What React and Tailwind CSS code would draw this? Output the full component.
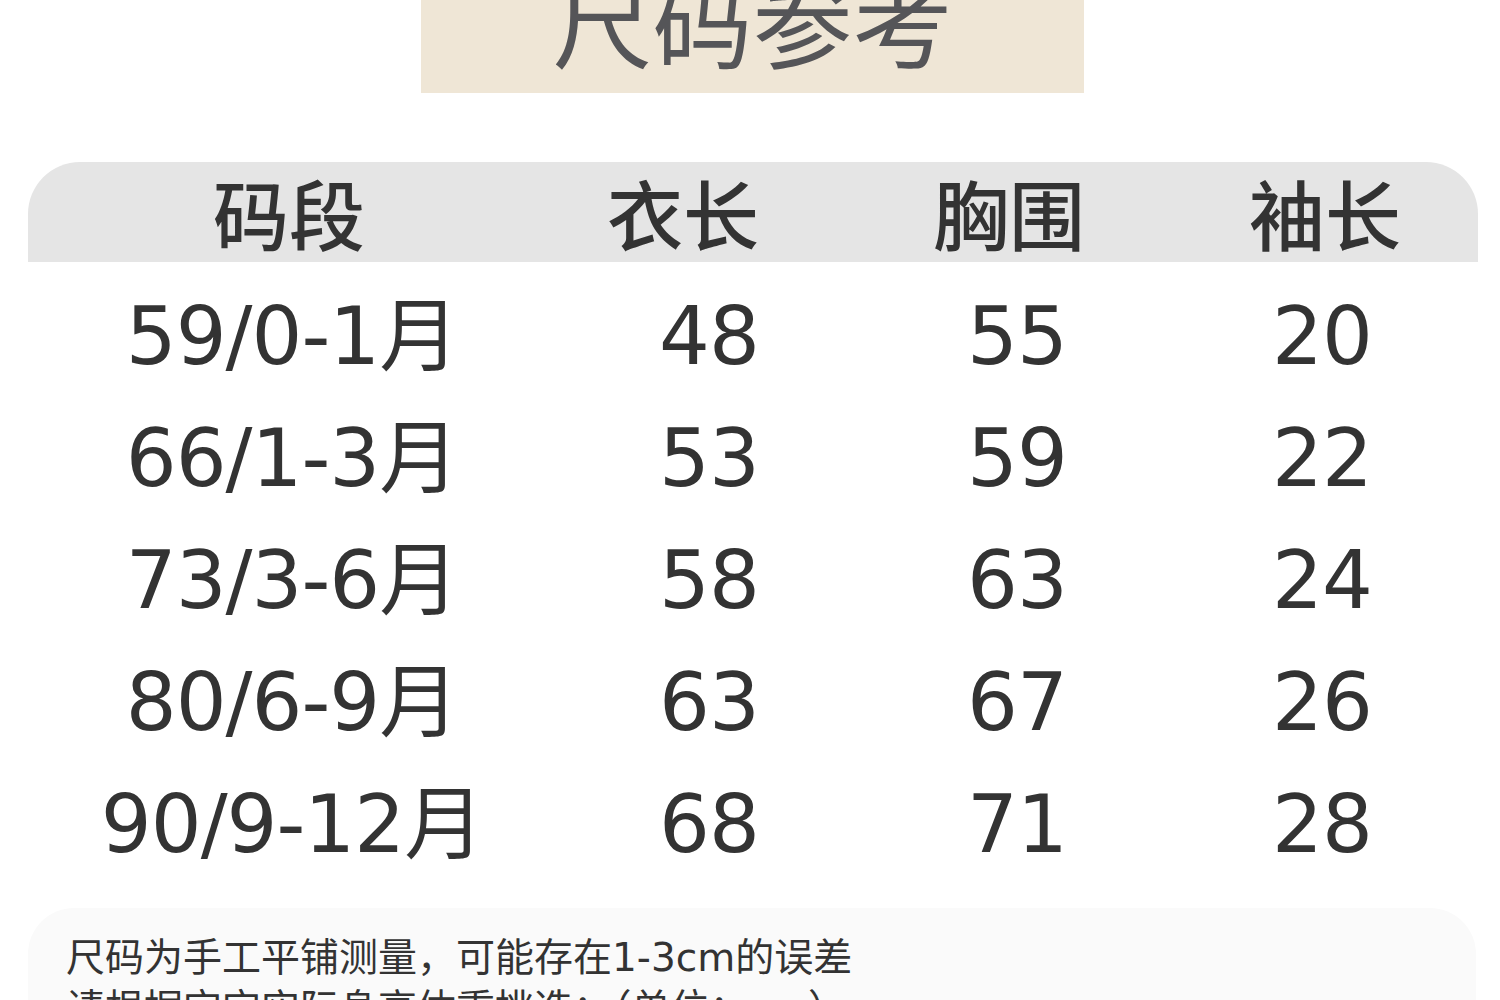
const rows = [
  ["59/0-1月", "48", "55", "20"],
  ["66/1-3月", "53", "59", "22"],
  ["73/3-6月", "58", "63", "24"],
  ["80/6-9月", "63", "67", "26"],
  ["90/9-12月", "68", "71", "28"],
];

const headers = ["码段", "衣长", "胸围", "袖长"];

function App() {
  return (
    <div
      className="w-[1500px] h-[1000px] overflow-hidden bg-white text-[#333333]"
      style={{ fontFamily: '"DejaVu Sans", "Noto Sans CJK SC", sans-serif' }}
    >
      {/* Title */}
      <div className="flex justify-center">
        <div className="w-[663px] h-[93px] bg-[#efe6d6] flex items-end justify-center overflow-hidden ml-[5px]">
          <span className="text-[100px] leading-none text-[#555558] pb-[25px] font-normal [font-family:'Noto_Sans_CJK_SC',sans-serif]">
            尺码参考
          </span>
        </div>
      </div>

      <div className="px-[28px] pt-[69px]">
        {/* Header */}
        <div className="h-[100px] w-[1450px] bg-[#e5e5e5] rounded-t-[52px] grid grid-cols-[522px_266px_386px_246px] items-center">
          {headers.map((h) => (
            <div
              key={h}
              className="text-center text-[76px] leading-none font-medium [font-family:'Noto_Sans_CJK_SC',sans-serif]"
            >
              {h}
            </div>
          ))}
        </div>

        {/* Rows */}
        <div className="pt-[14px]">
          {rows.map((r) => (
            <div
              key={r[0]}
              className="h-[122px] grid grid-cols-[528px_306px_310px_1fr] items-center"
            >
              {r.map((c, i) => (
                <div key={i} className="text-center text-[80px] leading-none tracking-[-1px]">
                  {c}
                </div>
              ))}
            </div>
          ))}
        </div>

        {/* Note */}
        <div className="mt-[22px] w-[1448px] h-[200px] bg-[#fafafa] rounded-[46px] pl-[38px] pt-[24px] text-[39px] leading-[51px] text-[#333333]">
          <p>尺码为手工平铺测量，可能存在1-3cm的误差</p>
          <p>请根据宝宝实际身高体重挑选：（单位：cm）</p>
        </div>
      </div>
    </div>
  );
}

export default App;
